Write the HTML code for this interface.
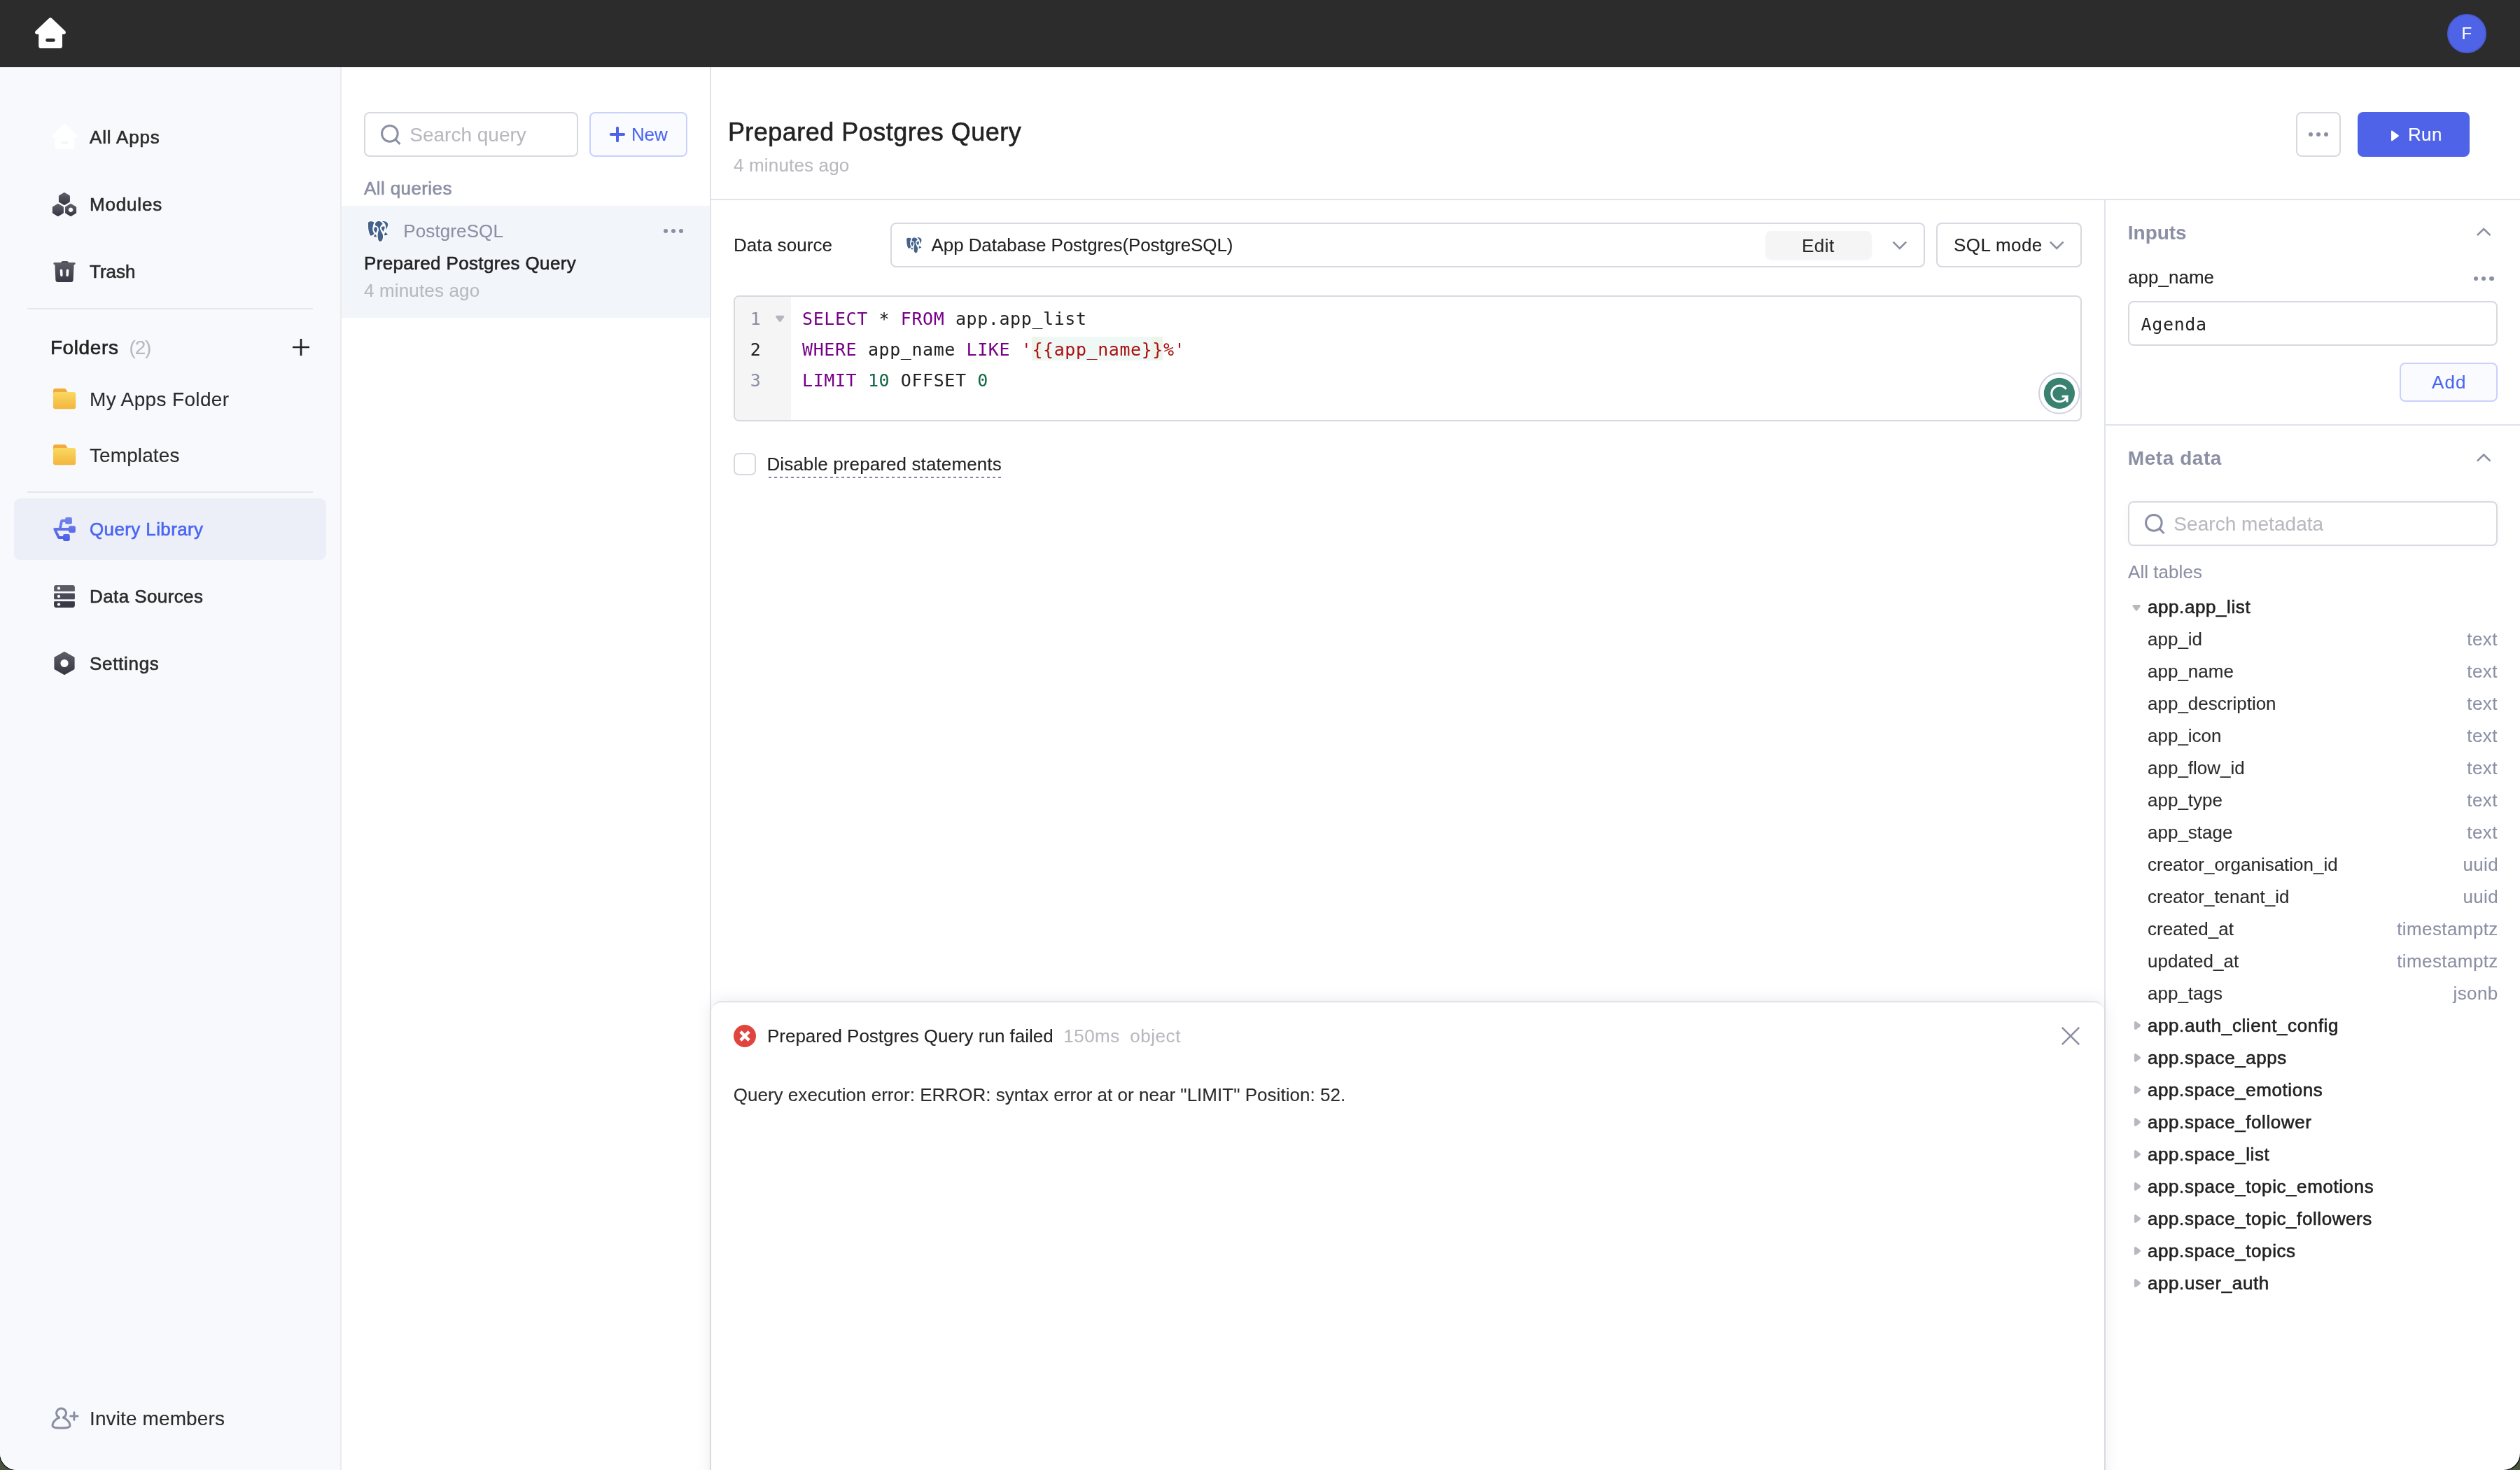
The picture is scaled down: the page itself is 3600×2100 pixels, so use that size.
<!DOCTYPE html>
<html lang="en">
<head>
<meta charset="utf-8">
<title>Query Library</title>
<style>
html,body{margin:0;padding:0;}
html{background:#47553d;}
body{width:3600px;height:2100px;position:relative;overflow:hidden;font-family:"Liberation Sans",Arial,sans-serif;}
#app{position:absolute;left:0;top:0;width:3600px;height:2100px;background:#fff;border-radius:0 0 24px 24px;overflow:hidden;box-shadow:0 0 0 1.3px #0a0a0a;}
.abs,.t,svg.i{position:absolute;}
.t{white-space:pre;line-height:1;display:block;}
#txt{position:absolute;left:0;top:0;width:3600px;height:2100px;will-change:transform;}
.code{font-family:"DejaVu Sans Mono",monospace;font-size:25px;letter-spacing:0.58px;color:#222;}
.box{position:absolute;box-sizing:border-box;border:2px solid #d7d9e0;border-radius:8px;background:#fff;}
.dot{position:absolute;width:6.4px;height:6.4px;border-radius:50%;background:#8b8fa3;}
</style>
</head>
<body>
<div id="app">
<!-- header -->
<div class="abs" id="topbar" style="left:0;top:0;width:3600px;height:96px;background:#2c2c2c"></div>
<svg class="i" style="left:44px;top:20px" width="56" height="56" viewBox="44 20 56 56">
  <path d="M72 28 L52.8 46.3 H91.2 Z" fill="#fff" stroke="#fff" stroke-width="5.4" stroke-linejoin="round"/>
  <rect x="55.2" y="44" width="33.8" height="25" rx="3.6" fill="#fff"/>
  <rect x="65.2" y="55" width="13.6" height="4.8" rx="2.4" fill="#2c2c2c"/>
</svg>
<div class="abs" style="left:3496px;top:20px;width:56px;height:56px;border-radius:50%;background:#4f63e6;box-sizing:border-box;border:2px solid #4a5cd6"></div>

<!-- sidebar -->
<div class="abs" id="sidebar" style="left:0;top:96px;width:486px;height:2004px;background:#f7f9fc;border-right:2px solid #ebebeb"></div>
<div class="abs" style="left:39px;top:440px;width:408px;height:2px;background:#e6e7ec"></div>
<div class="abs" style="left:39px;top:702px;width:408px;height:2px;background:#e6e7ec"></div>
<div class="abs" style="left:20px;top:712px;width:446px;height:88px;border-radius:9px;background:#eceff8"></div>

<!-- col2 -->
<div class="abs" style="left:1014px;top:96px;width:2px;height:2004px;background:#e1e3eb"></div>
<div class="box" style="left:520px;top:160px;width:306px;height:64px;"></div>
<div class="box" style="left:842px;top:160px;width:140px;height:64px;border-color:#c9d1fc;background:#fafbff"></div>
<div class="abs" style="left:488px;top:294px;width:526px;height:160px;background:#f2f5fa"></div>
<div class="dot" style="left:947.5px;top:326.8px"></div><div class="dot" style="left:958.8px;top:326.8px"></div><div class="dot" style="left:970.1px;top:326.8px"></div>

<!-- main header -->
<div class="abs" style="left:1016px;top:284px;width:2584px;height:2px;background:#e1e3eb"></div>
<div class="box" style="left:3280px;top:160px;width:64px;height:64px;"></div>
<div class="dot" style="left:3297.7px;top:188.6px"></div><div class="dot" style="left:3308.7px;top:188.6px"></div><div class="dot" style="left:3319.8px;top:188.6px"></div>
<div class="abs" style="left:3368px;top:160px;width:160px;height:64px;border-radius:8px;background:#4f63e8"></div>
<svg class="i" style="left:3414px;top:185px" width="16" height="18" viewBox="0 0 16 18"><path d="M3 2.6 L12 9 L3 15.4 Z" fill="#fff" stroke="#fff" stroke-width="2" stroke-linejoin="round"/></svg>

<!-- editor area -->
<div class="box" style="left:1272px;top:318px;width:1478px;height:64px;"></div>
<div class="abs" style="left:2522px;top:330px;width:152px;height:40px;border-radius:8px;background:#f5f5f6;box-shadow:0 2px 3px rgba(0,0,0,0.04)"></div>
<div class="box" style="left:2766px;top:318px;width:208px;height:64px;"></div>
<div class="box" style="left:1048px;top:422px;width:1926px;height:180px;overflow:hidden"><div class="abs" style="left:0;top:0;width:80px;height:180px;background:#f5f5f5"></div></div>
<div class="abs" style="left:1474px;top:481px;width:187px;height:34px;background:#eff8f5"></div>
<div class="abs" style="left:1474px;top:481px;width:15px;height:34px;background:#eef4ea"></div>
<div class="abs" style="left:1645px;top:481px;width:16px;height:34px;background:#eef4ea"></div>
<div class="box" style="left:1048px;top:647px;width:32px;height:32px;border-radius:7px"></div>
<div class="abs" style="left:1098px;top:681px;width:332px;height:2px;background:repeating-linear-gradient(90deg,#858aa2 0 4px,transparent 4px 8px)"></div>

<!-- right panel -->
<div class="abs" style="left:3006px;top:286px;width:2px;height:1814px;background:#e1e3eb"></div>
<div class="box" style="left:3040px;top:430px;width:528px;height:64px;"></div>
<div class="dot" style="left:3533.6px;top:394.5px"></div><div class="dot" style="left:3544.9px;top:394.5px"></div><div class="dot" style="left:3556.2px;top:394.5px"></div>
<div class="box" style="left:3428px;top:518px;width:140px;height:56px;border-color:#c9d1fc;background:#fafbff"></div>
<div class="abs" style="left:3008px;top:606px;width:592px;height:2px;background:#e1e3eb"></div>
<div class="box" style="left:3040px;top:716px;width:528px;height:64px;box-shadow:0 0 14px rgba(0,0,0,0.03)"></div>

<!-- result panel -->
<div class="abs" id="result" style="left:1016px;top:1430px;width:1990px;height:700px;box-sizing:border-box;background:#fff;border-top:2px solid #e1e3eb;border-radius:15px 15px 0 0;box-shadow:0 0 24px rgba(0,0,0,0.09)"></div>
<div class="abs" style="left:1048px;top:1464px;width:32px;height:32px;border-radius:50%;background:#e0443d"></div>
<svg class="i" style="left:1048px;top:1464px" width="32" height="32" viewBox="0 0 32 32"><path d="M9.9 9.9 L22.1 22.1 M22.1 9.9 L9.9 22.1" stroke="#fff" stroke-width="4.5"/></svg>
<svg class="i" style="left:2944px;top:1466px" width="28" height="28" viewBox="0 0 28 28"><path d="M1.8 1.8 L26.2 26.2 M26.2 1.8 L1.8 26.2" stroke="#8b8fa3" stroke-width="2.6" fill="none"/></svg>

<svg class="i" style="left:0;top:0;pointer-events:none" width="3600" height="2100" viewBox="0 0 3600 2100">
<defs>
<linearGradient id="gd" x1="0" y1="0" x2="0" y2="1"><stop offset="0" stop-color="#5b5e67"/><stop offset="1" stop-color="#363944"/></linearGradient>
<linearGradient id="gf" x1="0" y1="0" x2="0" y2="1"><stop offset="0" stop-color="#f9d962"/><stop offset="1" stop-color="#f3b53d"/></linearGradient>
<linearGradient id="gq" x1="0" y1="739" x2="0" y2="773" gradientUnits="userSpaceOnUse"><stop offset="0" stop-color="#7485ea"/><stop offset="1" stop-color="#495de8"/></linearGradient>
</defs>
<g transform="translate(33.17,156.61) scale(0.82)"><path d="M72 27.2 L52.8 46.3 H91.2 Z" fill="#fff" stroke="#fff" stroke-width="5.4" stroke-linejoin="round"/><rect x="55.2" y="44" width="33.8" height="25" rx="3.6" fill="#fff"/><rect x="65.2" y="55" width="13.6" height="4.8" rx="2.4" fill="#f4f6fa"/></g>
<polygon points="91.90,276.70 98.22,280.35 98.22,287.65 91.90,291.30 85.58,287.65 85.58,280.35" fill="url(#gd)" stroke="url(#gd)" stroke-width="3.4" stroke-linejoin="round"/>
<polygon points="82.90,292.70 89.22,296.35 89.22,303.65 82.90,307.30 76.58,303.65 76.58,296.35" fill="url(#gd)" stroke="url(#gd)" stroke-width="3.4" stroke-linejoin="round"/>
<polygon points="101.10,292.70 107.42,296.35 107.42,303.65 101.10,307.30 94.78,303.65 94.78,296.35" fill="url(#gd)" stroke="url(#gd)" stroke-width="3.4" stroke-linejoin="round"/>
<polygon points="101.10,296.70 103.78,298.25 103.78,301.35 101.10,302.90 98.42,301.35 98.42,298.25" fill="#fcfcfe" stroke="#fcfcfe" stroke-width="0.8" stroke-linejoin="round"/>
<path d="M86.6 375.4 L88.2 373.5 Q88.8 372.9 89.6 372.9 H95.6 Q96.4 372.9 97 373.5 L98.6 375.4 Z" fill="url(#gd)"/>
<path d="M77.6 375 H106.4 Q107.6 375 107.6 376.2 V376.9 Q107.6 378 106.4 378 H105.6 L104.6 400 Q104.4 402.9 101.6 402.9 H82.4 Q79.6 402.9 79.4 400 L78.4 378 H77.6 Q76.4 378 76.4 376.9 V376.2 Q76.4 375 77.6 375 Z" fill="url(#gd)"/>
<path d="M87.5 386.2 L87.9 393.2 M96.5 386.2 L96.1 393.2" stroke="#fafbfd" stroke-width="3.5" stroke-linecap="round"/>
<g transform="translate(0,0)"><path d="M76 558.2 Q76 555 79.2 555 H91.8 Q93.6 555 94.4 556.4 L97.4 561.5 V566 H76 Z" fill="#f2ab3b"/><rect x="76" y="560" width="32.2" height="24.2" rx="3.2" fill="url(#gf)"/></g>
<g transform="translate(0,80)"><path d="M76 558.2 Q76 555 79.2 555 H91.8 Q93.6 555 94.4 556.4 L97.4 561.5 V566 H76 Z" fill="#f2ab3b"/><rect x="76" y="560" width="32.2" height="24.2" rx="3.2" fill="url(#gf)"/></g>
<path d="M418 496 H442 M430 484 V508" stroke="#222" stroke-width="2.7"/>
<g fill="url(#gq)" stroke="url(#gq)">
<rect x="93.1" y="739" width="9.8" height="9.8" rx="2.3" stroke="none"/><rect x="98.1" y="751.2" width="9.8" height="9.8" rx="2.3" stroke="none"/><rect x="90" y="763.1" width="9.8" height="9.8" rx="2.3" stroke="none"/>
<path d="M99 756 H78.2 L84 768 H91 M85.6 756 L88.2 744 H94" fill="none" stroke-width="3.8" stroke-linejoin="round" stroke-linecap="round"/>
</g>
<path d="M80.2 836 H103.8 Q106.9 836 106.9 839.1 V843.6 Q106.9 844.8 105.7 844.8 H78.3 Q77.1 844.8 77.1 843.6 V839.1 Q77.1 836 80.2 836 Z" fill="#595c65"/>
<rect x="77.1" y="847.6" width="29.8" height="8.6" rx="1.2" fill="#484b55"/>
<path d="M78.3 859 H105.7 Q106.9 859 106.9 860.2 V864.8 Q106.9 867.9 103.8 867.9 H80.2 Q77.1 867.9 77.1 864.8 V860.2 Q77.1 859 78.3 859 Z" fill="#383b46"/>
<circle cx="84" cy="840.4" r="2.15" fill="#fafbfd"/>
<circle cx="84" cy="851.9" r="2.15" fill="#fafbfd"/>
<circle cx="84" cy="863.4" r="2.15" fill="#fafbfd"/>
<polygon points="92.00,932.60 104.90,940.05 104.90,954.95 92.00,962.40 79.10,954.95 79.10,940.05" fill="url(#gd)" stroke="url(#gd)" stroke-width="3.4" stroke-linejoin="round"/><circle cx="92" cy="947.5" r="5.6" fill="#fafbfd"/>
<g fill="none" stroke="#8b8fa3" stroke-width="3" stroke-linecap="round" stroke-linejoin="round">
<path d="M84.6 2025.1 A6.9 6.9 0 1 1 90.5 2025.1"/>
<path d="M84.6 2025.1 C78.5 2027.5 75 2032.5 75 2036.6 C75 2040 81.5 2040 87.5 2040 C93.5 2040 100 2040 100 2036.6 C100 2032.5 96.5 2027.5 90.5 2025.1"/>
<path d="M100.7 2023 H111.1 M105.9 2017.8 V2028.2"/>
</g>
<g fill="none" stroke="#8b8fa3" stroke-width="3"><circle cx="556.85" cy="190.8" r="11.35"/><path d="M564.75 199.00 L571.45 206.00"/></g>
<g fill="none" stroke="#8b8fa3" stroke-width="3"><circle cx="3076.85" cy="746.8" r="11.35"/><path d="M3084.75 755.00 L3091.45 762.00"/></g>
<path d="M872.8 192 H891.1 M882 182.7 V201.3" stroke="#4d62e8" stroke-width="4" stroke-linecap="round"/>
<path d="M2704.5 345.6 L2713.8 354.9 L2723.1 345.6" fill="none" stroke="#8b8fa3" stroke-width="2.7"/>
<path d="M2928.9 345.6 L2938.2 354.9 L2947.5 345.6" fill="none" stroke="#8b8fa3" stroke-width="2.7"/>
<path d="M3538.9 336.1 L3548.2 327.1 L3557.5 336.1" fill="none" stroke="#8b8fa3" stroke-width="2.7"/>
<path d="M3538.9 658.6 L3548.2 649.6 L3557.5 658.6" fill="none" stroke="#8b8fa3" stroke-width="2.7"/>
<path d="M1109.7 452.3 H1118.7 L1114.2 458.2 Z" fill="#b4b6bf" stroke="#b4b6bf" stroke-width="3.2" stroke-linejoin="round"/>
<path d="M3048 865.6 H3056.2 L3052.1 871.2 Z" fill="#b8b9bf" stroke="#b8b9bf" stroke-width="3" stroke-linejoin="round"/>
<path d="M3050.7 1460.9 L3056.2 1465.0 L3050.7 1469.1 Z" fill="#b8b9bf" stroke="#b8b9bf" stroke-width="3.6" stroke-linejoin="round"/>
<path d="M3050.7 1506.9 L3056.2 1511.0 L3050.7 1515.1 Z" fill="#b8b9bf" stroke="#b8b9bf" stroke-width="3.6" stroke-linejoin="round"/>
<path d="M3050.7 1552.9 L3056.2 1557.0 L3050.7 1561.1 Z" fill="#b8b9bf" stroke="#b8b9bf" stroke-width="3.6" stroke-linejoin="round"/>
<path d="M3050.7 1598.9 L3056.2 1603.0 L3050.7 1607.1 Z" fill="#b8b9bf" stroke="#b8b9bf" stroke-width="3.6" stroke-linejoin="round"/>
<path d="M3050.7 1644.9 L3056.2 1649.0 L3050.7 1653.1 Z" fill="#b8b9bf" stroke="#b8b9bf" stroke-width="3.6" stroke-linejoin="round"/>
<path d="M3050.7 1690.9 L3056.2 1695.0 L3050.7 1699.1 Z" fill="#b8b9bf" stroke="#b8b9bf" stroke-width="3.6" stroke-linejoin="round"/>
<path d="M3050.7 1736.9 L3056.2 1741.0 L3050.7 1745.1 Z" fill="#b8b9bf" stroke="#b8b9bf" stroke-width="3.6" stroke-linejoin="round"/>
<path d="M3050.7 1782.9 L3056.2 1787.0 L3050.7 1791.1 Z" fill="#b8b9bf" stroke="#b8b9bf" stroke-width="3.6" stroke-linejoin="round"/>
<path d="M3050.7 1828.9 L3056.2 1833.0 L3050.7 1837.1 Z" fill="#b8b9bf" stroke="#b8b9bf" stroke-width="3.6" stroke-linejoin="round"/>
<circle cx="2941.8" cy="561.8" r="28.8" fill="#fff" stroke="#cfd2e0" stroke-width="2"/><circle cx="2941.9" cy="561.9" r="22.1" fill="#38826f"/>
<path d="M2951.6 555.8 A11.4 11.4 0 1 0 2952.9 566.3 H2945.6 M2953 565.6 V574.5" fill="none" stroke="#fff" stroke-width="3"/>
<g transform="translate(524.3,314.5) scale(1.0)" stroke="#fff" stroke-width="2.6" stroke-linejoin="round" fill="#44628b" paint-order="stroke">
<path d="M1.7 3.4 C2.6 1.6 7 1.2 10.3 3 C9.4 5 8.8 6.8 8.5 8.6 C8 11 7.9 13 8.2 14.6 C8.6 16.6 9.4 18.2 10.2 19.4 C8.8 20.8 6.8 22.2 5.3 22.2 C4.2 21 3.4 19.4 2.9 17.3 C2.2 14.6 1.8 12.4 1.8 10 C1.7 7.6 1.5 5 1.7 3.4 Z"/>
<path d="M21.6 1.7 C23.4 1.2 25.2 1.3 26.6 1.9 C28.6 2.8 29.8 4.2 29.9 6 C30 7.4 29.6 8.8 29 10 C28.4 11.4 27.6 12.8 26.5 14 C27 12.6 27.1 11.2 26.9 10 C26.7 8.4 26.5 7 26 5.9 C25.5 4.8 24.6 3.8 23.7 3.1 C23 2.5 22.2 2 21.6 1.7 Z"/>
<path d="M11.8 5 C12.4 3.2 13.6 2 15.1 1.7 C16.2 1.5 17.4 1.5 18.4 1.8 C20 2.4 21.6 3.8 22.4 5.5 C21.2 6.2 20.2 7.2 19.6 8.4 C19 9.6 18.4 10.6 18.5 11.7 C18.8 13.4 19.6 15 20.4 16.5 C21.2 17.8 22 19 22.4 20.2 C22.8 21.6 22.8 23 22.7 24.3 C22.6 26 22.2 27.6 21.6 28.8 C21 30 20 30.5 18.8 30.5 C17.6 30.4 16.6 29.4 16.1 28 C15.6 26.2 15.3 24.2 15.3 22.2 C15.3 20.6 15.6 19 15.9 17.3 C16.2 15.8 16.8 14.6 16.7 13.3 C16.6 11.8 16 10.6 15.1 9.6 C14.2 8.8 12.6 8.4 11.8 7.6 C11.5 6.8 11.5 5.8 11.8 5 Z"/>
<path d="M12.2 9.7 C13.6 9.7 14.7 10.8 14.7 12.4 C14.7 14 14 16 12.7 18.2 C11 16.4 9.8 14.8 9.8 13.3 C9.8 11.2 10.8 9.7 12.2 9.7 Z"/>
<path d="M20.4 10.2 C21.6 9.2 23.8 8.8 25.3 9.3 C25.4 11.4 24.6 14 23.3 16.5 C21.8 14.6 20.6 12.4 20.4 10.2 Z"/>
<path d="M9.5 23.2 C10 22 10.8 21 11.8 20.2 C12.8 21.2 13.6 22.6 13.9 23.9 C12.4 24.2 10.6 24 9.5 23.2 Z"/>
<path d="M24.5 21.8 C24.9 20.2 25.4 18.6 25.9 17.3 C27.2 18.2 28.8 19.2 29.8 20.2 C28.4 21.2 26.2 22 24.5 21.8 Z"/>
</g>
<g transform="translate(1294,338.3) scale(0.75)" stroke="#fff" stroke-width="2.6" stroke-linejoin="round" fill="#44628b" paint-order="stroke">
<path d="M1.7 3.4 C2.6 1.6 7 1.2 10.3 3 C9.4 5 8.8 6.8 8.5 8.6 C8 11 7.9 13 8.2 14.6 C8.6 16.6 9.4 18.2 10.2 19.4 C8.8 20.8 6.8 22.2 5.3 22.2 C4.2 21 3.4 19.4 2.9 17.3 C2.2 14.6 1.8 12.4 1.8 10 C1.7 7.6 1.5 5 1.7 3.4 Z"/>
<path d="M21.6 1.7 C23.4 1.2 25.2 1.3 26.6 1.9 C28.6 2.8 29.8 4.2 29.9 6 C30 7.4 29.6 8.8 29 10 C28.4 11.4 27.6 12.8 26.5 14 C27 12.6 27.1 11.2 26.9 10 C26.7 8.4 26.5 7 26 5.9 C25.5 4.8 24.6 3.8 23.7 3.1 C23 2.5 22.2 2 21.6 1.7 Z"/>
<path d="M11.8 5 C12.4 3.2 13.6 2 15.1 1.7 C16.2 1.5 17.4 1.5 18.4 1.8 C20 2.4 21.6 3.8 22.4 5.5 C21.2 6.2 20.2 7.2 19.6 8.4 C19 9.6 18.4 10.6 18.5 11.7 C18.8 13.4 19.6 15 20.4 16.5 C21.2 17.8 22 19 22.4 20.2 C22.8 21.6 22.8 23 22.7 24.3 C22.6 26 22.2 27.6 21.6 28.8 C21 30 20 30.5 18.8 30.5 C17.6 30.4 16.6 29.4 16.1 28 C15.6 26.2 15.3 24.2 15.3 22.2 C15.3 20.6 15.6 19 15.9 17.3 C16.2 15.8 16.8 14.6 16.7 13.3 C16.6 11.8 16 10.6 15.1 9.6 C14.2 8.8 12.6 8.4 11.8 7.6 C11.5 6.8 11.5 5.8 11.8 5 Z"/>
<path d="M12.2 9.7 C13.6 9.7 14.7 10.8 14.7 12.4 C14.7 14 14 16 12.7 18.2 C11 16.4 9.8 14.8 9.8 13.3 C9.8 11.2 10.8 9.7 12.2 9.7 Z"/>
<path d="M20.4 10.2 C21.6 9.2 23.8 8.8 25.3 9.3 C25.4 11.4 24.6 14 23.3 16.5 C21.8 14.6 20.6 12.4 20.4 10.2 Z"/>
<path d="M9.5 23.2 C10 22 10.8 21 11.8 20.2 C12.8 21.2 13.6 22.6 13.9 23.9 C12.4 24.2 10.6 24 9.5 23.2 Z"/>
<path d="M24.5 21.8 C24.9 20.2 25.4 18.6 25.9 17.3 C27.2 18.2 28.8 19.2 29.8 20.2 C28.4 21.2 26.2 22 24.5 21.8 Z"/>
</g>
</svg>
<div id="txt">
<span class="t" style="left:3516.42px;top:35.50px;font-size:24px;color:#fff;letter-spacing:0.000px;-webkit-text-stroke:0.1px currentColor;">F</span>
<span class="t" style="left:128.00px;top:183.00px;font-size:26px;color:#2b2b2b;letter-spacing:0.833px;-webkit-text-stroke:0.6px currentColor;">All Apps</span>
<span class="t" style="left:128.00px;top:279.00px;font-size:26px;color:#2b2b2b;letter-spacing:0.823px;-webkit-text-stroke:0.6px currentColor;">Modules</span>
<span class="t" style="left:128.00px;top:375.00px;font-size:26px;color:#2b2b2b;letter-spacing:0.016px;-webkit-text-stroke:0.6px currentColor;">Trash</span>
<span class="t" style="left:71.88px;top:482.70px;font-size:28px;color:#222;letter-spacing:0.609px;-webkit-text-stroke:0.6px currentColor;">Folders</span>
<span class="t" style="left:184.60px;top:482.70px;font-size:28px;color:#b8b9bf;letter-spacing:-1.186px;-webkit-text-stroke:0.1px currentColor;">(2)</span>
<span class="t" style="left:128.00px;top:557.10px;font-size:28px;color:#2b2b2b;letter-spacing:0.349px;-webkit-text-stroke:0.1px currentColor;">My Apps Folder</span>
<span class="t" style="left:128.00px;top:637.10px;font-size:28px;color:#2b2b2b;letter-spacing:0.097px;-webkit-text-stroke:0.1px currentColor;">Templates</span>
<span class="t" style="left:128.00px;top:743.00px;font-size:26px;color:#4965f2;letter-spacing:0.383px;-webkit-text-stroke:0.6px currentColor;">Query Library</span>
<span class="t" style="left:128.00px;top:839.00px;font-size:26px;color:#2b2b2b;letter-spacing:0.404px;-webkit-text-stroke:0.6px currentColor;">Data Sources</span>
<span class="t" style="left:128.00px;top:934.90px;font-size:26px;color:#2b2b2b;letter-spacing:0.694px;-webkit-text-stroke:0.6px currentColor;">Settings</span>
<span class="t" style="left:128.00px;top:2013.30px;font-size:28px;color:#2b2b2b;letter-spacing:0.116px;-webkit-text-stroke:0.1px currentColor;">Invite members</span>
<span class="t" style="left:585.22px;top:178.50px;font-size:28px;color:#b8b9bf;letter-spacing:0.008px;-webkit-text-stroke:0.1px currentColor;">Search query</span>
<span class="t" style="left:901.93px;top:178.70px;font-size:26px;color:#4965f2;letter-spacing:-0.099px;-webkit-text-stroke:0.1px currentColor;">New</span>
<span class="t" style="left:520.00px;top:256.00px;font-size:26px;color:#8b8fa3;letter-spacing:0.402px;-webkit-text-stroke:0.6px currentColor;">All queries</span>
<span class="t" style="left:576.23px;top:317.20px;font-size:26px;color:#8b8fa3;letter-spacing:0.120px;-webkit-text-stroke:0.1px currentColor;">PostgreSQL</span>
<span class="t" style="left:520.02px;top:362.80px;font-size:26px;color:#222;letter-spacing:0.359px;-webkit-text-stroke:0.6px currentColor;">Prepared Postgres Query</span>
<span class="t" style="left:519.96px;top:401.80px;font-size:26px;color:#b8b9bf;letter-spacing:0.154px;-webkit-text-stroke:0.1px currentColor;">4 minutes ago</span>
<span class="t" style="left:1039.89px;top:170.80px;font-size:36px;color:#222;letter-spacing:0.487px;-webkit-text-stroke:0.6px currentColor;">Prepared Postgres Query</span>
<span class="t" style="left:1048.06px;top:222.70px;font-size:26px;color:#b8b9bf;letter-spacing:0.154px;-webkit-text-stroke:0.1px currentColor;">4 minutes ago</span>
<span class="t" style="left:3439.93px;top:179.10px;font-size:26px;color:#fff;letter-spacing:0.388px;-webkit-text-stroke:0.1px currentColor;">Run</span>
<span class="t" style="left:1047.93px;top:337.00px;font-size:26px;color:#222;letter-spacing:0.097px;-webkit-text-stroke:0.1px currentColor;">Data source</span>
<span class="t" style="left:1330.52px;top:337.00px;font-size:26px;color:#222;letter-spacing:-0.082px;-webkit-text-stroke:0.1px currentColor;">App Database Postgres(PostgreSQL)</span>
<span class="t" style="left:2573.93px;top:337.50px;font-size:26px;color:#2b2b2b;letter-spacing:0.488px;-webkit-text-stroke:0.1px currentColor;">Edit</span>
<span class="t" style="left:2791.11px;top:337.00px;font-size:26px;color:#222;letter-spacing:0.397px;-webkit-text-stroke:0.1px currentColor;">SQL mode</span>
<span class="t" style="left:1095.43px;top:649.70px;font-size:26px;color:#222;letter-spacing:0.109px;-webkit-text-stroke:0.1px currentColor;">Disable prepared statements</span>
<span class="t" style="left:1095.98px;top:1466.80px;font-size:26px;color:#222;letter-spacing:-0.008px;-webkit-text-stroke:0.1px currentColor;">Prepared Postgres Query run failed</span>
<span class="t" style="left:1519.32px;top:1466.80px;font-size:26px;color:#b8b9bf;letter-spacing:0.468px;-webkit-text-stroke:0.1px currentColor;">150ms</span>
<span class="t" style="left:1614.23px;top:1466.80px;font-size:26px;color:#b8b9bf;letter-spacing:0.554px;-webkit-text-stroke:0.1px currentColor;">object</span>
<span class="t" style="left:1047.70px;top:1550.90px;font-size:26px;color:#2b2b2b;letter-spacing:0.027px;-webkit-text-stroke:0.1px currentColor;">Query execution error: ERROR: syntax error at or near &quot;LIMIT&quot; Position: 52.</span>
<span class="t" style="left:3039.86px;top:319.00px;font-size:28px;color:#8b8fa3;letter-spacing:-0.030px;font-weight:700;">Inputs</span>
<span class="t" style="left:3040.03px;top:382.80px;font-size:26px;color:#222;letter-spacing:0.019px;-webkit-text-stroke:0.1px currentColor;">app_name</span>
<span class="t" style="left:3058.59px;top:451.30px;font-size:25px;color:#222;letter-spacing:0.641px;font-family:'DejaVu Sans Mono',monospace;">Agenda</span>
<span class="t" style="left:3474.02px;top:533.00px;font-size:26px;color:#4965f2;letter-spacing:1.142px;-webkit-text-stroke:0.1px currentColor;">Add</span>
<span class="t" style="left:3039.86px;top:641.00px;font-size:28px;color:#8b8fa3;letter-spacing:0.545px;font-weight:700;">Meta data</span>
<span class="t" style="left:3105.32px;top:735.00px;font-size:28px;color:#b8b9bf;letter-spacing:0.045px;-webkit-text-stroke:0.1px currentColor;">Search metadata</span>
<span class="t" style="left:3040.00px;top:804.20px;font-size:26px;color:#8b8fa3;letter-spacing:0.050px;-webkit-text-stroke:0.1px currentColor;">All tables</span>
<span class="t" style="left:3068.00px;top:854.20px;font-size:26px;color:#222;letter-spacing:0.580px;-webkit-text-stroke:0.6px currentColor;">app.app_list</span>
<span class="t" style="left:3068.00px;top:900.20px;font-size:26px;color:#2b2b2b;letter-spacing:0.000px;-webkit-text-stroke:0.1px currentColor;">app_id</span>
<span class="t" style="left:3524.27px;top:900.20px;font-size:26px;color:#8b8fa3;letter-spacing:0.400px;-webkit-text-stroke:0.1px currentColor;">text</span>
<span class="t" style="left:3068.00px;top:946.20px;font-size:26px;color:#2b2b2b;letter-spacing:0.000px;-webkit-text-stroke:0.1px currentColor;">app_name</span>
<span class="t" style="left:3524.27px;top:946.20px;font-size:26px;color:#8b8fa3;letter-spacing:0.400px;-webkit-text-stroke:0.1px currentColor;">text</span>
<span class="t" style="left:3068.00px;top:992.20px;font-size:26px;color:#2b2b2b;letter-spacing:0.000px;-webkit-text-stroke:0.1px currentColor;">app_description</span>
<span class="t" style="left:3524.27px;top:992.20px;font-size:26px;color:#8b8fa3;letter-spacing:0.400px;-webkit-text-stroke:0.1px currentColor;">text</span>
<span class="t" style="left:3068.00px;top:1038.20px;font-size:26px;color:#2b2b2b;letter-spacing:0.000px;-webkit-text-stroke:0.1px currentColor;">app_icon</span>
<span class="t" style="left:3524.27px;top:1038.20px;font-size:26px;color:#8b8fa3;letter-spacing:0.400px;-webkit-text-stroke:0.1px currentColor;">text</span>
<span class="t" style="left:3068.00px;top:1084.20px;font-size:26px;color:#2b2b2b;letter-spacing:0.000px;-webkit-text-stroke:0.1px currentColor;">app_flow_id</span>
<span class="t" style="left:3524.27px;top:1084.20px;font-size:26px;color:#8b8fa3;letter-spacing:0.400px;-webkit-text-stroke:0.1px currentColor;">text</span>
<span class="t" style="left:3068.00px;top:1130.20px;font-size:26px;color:#2b2b2b;letter-spacing:0.000px;-webkit-text-stroke:0.1px currentColor;">app_type</span>
<span class="t" style="left:3524.27px;top:1130.20px;font-size:26px;color:#8b8fa3;letter-spacing:0.400px;-webkit-text-stroke:0.1px currentColor;">text</span>
<span class="t" style="left:3068.00px;top:1176.20px;font-size:26px;color:#2b2b2b;letter-spacing:0.000px;-webkit-text-stroke:0.1px currentColor;">app_stage</span>
<span class="t" style="left:3524.27px;top:1176.20px;font-size:26px;color:#8b8fa3;letter-spacing:0.400px;-webkit-text-stroke:0.1px currentColor;">text</span>
<span class="t" style="left:3068.00px;top:1222.20px;font-size:26px;color:#2b2b2b;letter-spacing:0.000px;-webkit-text-stroke:0.1px currentColor;">creator_organisation_id</span>
<span class="t" style="left:3518.40px;top:1222.20px;font-size:26px;color:#8b8fa3;letter-spacing:0.400px;-webkit-text-stroke:0.1px currentColor;">uuid</span>
<span class="t" style="left:3068.00px;top:1268.20px;font-size:26px;color:#2b2b2b;letter-spacing:0.000px;-webkit-text-stroke:0.1px currentColor;">creator_tenant_id</span>
<span class="t" style="left:3518.40px;top:1268.20px;font-size:26px;color:#8b8fa3;letter-spacing:0.400px;-webkit-text-stroke:0.1px currentColor;">uuid</span>
<span class="t" style="left:3068.00px;top:1314.20px;font-size:26px;color:#2b2b2b;letter-spacing:0.000px;-webkit-text-stroke:0.1px currentColor;">created_at</span>
<span class="t" style="left:3424.23px;top:1314.20px;font-size:26px;color:#8b8fa3;letter-spacing:0.400px;-webkit-text-stroke:0.1px currentColor;">timestamptz</span>
<span class="t" style="left:3068.00px;top:1360.20px;font-size:26px;color:#2b2b2b;letter-spacing:0.000px;-webkit-text-stroke:0.1px currentColor;">updated_at</span>
<span class="t" style="left:3424.23px;top:1360.20px;font-size:26px;color:#8b8fa3;letter-spacing:0.400px;-webkit-text-stroke:0.1px currentColor;">timestamptz</span>
<span class="t" style="left:3068.00px;top:1406.20px;font-size:26px;color:#2b2b2b;letter-spacing:0.000px;-webkit-text-stroke:0.1px currentColor;">app_tags</span>
<span class="t" style="left:3504.51px;top:1406.20px;font-size:26px;color:#8b8fa3;letter-spacing:0.400px;-webkit-text-stroke:0.1px currentColor;">jsonb</span>
<span class="t" style="left:3068.00px;top:1452.20px;font-size:26px;color:#222;letter-spacing:0.580px;-webkit-text-stroke:0.6px currentColor;">app.auth_client_config</span>
<span class="t" style="left:3068.00px;top:1498.20px;font-size:26px;color:#222;letter-spacing:0.580px;-webkit-text-stroke:0.6px currentColor;">app.space_apps</span>
<span class="t" style="left:3068.00px;top:1544.20px;font-size:26px;color:#222;letter-spacing:0.580px;-webkit-text-stroke:0.6px currentColor;">app.space_emotions</span>
<span class="t" style="left:3068.00px;top:1590.20px;font-size:26px;color:#222;letter-spacing:0.580px;-webkit-text-stroke:0.6px currentColor;">app.space_follower</span>
<span class="t" style="left:3068.00px;top:1636.20px;font-size:26px;color:#222;letter-spacing:0.580px;-webkit-text-stroke:0.6px currentColor;">app.space_list</span>
<span class="t" style="left:3068.00px;top:1682.20px;font-size:26px;color:#222;letter-spacing:0.580px;-webkit-text-stroke:0.6px currentColor;">app.space_topic_emotions</span>
<span class="t" style="left:3068.00px;top:1728.20px;font-size:26px;color:#222;letter-spacing:0.580px;-webkit-text-stroke:0.6px currentColor;">app.space_topic_followers</span>
<span class="t" style="left:3068.00px;top:1774.20px;font-size:26px;color:#222;letter-spacing:0.580px;-webkit-text-stroke:0.6px currentColor;">app.space_topics</span>
<span class="t" style="left:3068.00px;top:1820.20px;font-size:26px;color:#222;letter-spacing:0.580px;-webkit-text-stroke:0.6px currentColor;">app.user_auth</span>
<div class="t code" style="left:1146.10px;top:443.00px"><span style="color:#708">SELECT</span><span style="color:#222"> * </span><span style="color:#708">FROM</span><span style="color:#222"> app.app_list</span></div>
<div class="t code" style="left:1146.10px;top:487.00px"><span style="color:#708">WHERE</span><span style="color:#222"> app_name </span><span style="color:#708">LIKE</span><span style="color:#222"> </span><span style="color:#a11">&#x27;{{app_name}}%&#x27;</span></div>
<div class="t code" style="left:1146.10px;top:531.00px"><span style="color:#708">LIMIT</span><span style="color:#222"> </span><span style="color:#164">10</span><span style="color:#222"> OFFSET </span><span style="color:#164">0</span></div>
<div class="t code" style="left:1071.77px;top:443.00px;color:#8b8fa3">1</div>
<div class="t code" style="left:1071.77px;top:487.00px;color:#222">2</div>
<div class="t code" style="left:1071.77px;top:531.00px;color:#8b8fa3">3</div>
</div>
</div>
</body>
</html>
